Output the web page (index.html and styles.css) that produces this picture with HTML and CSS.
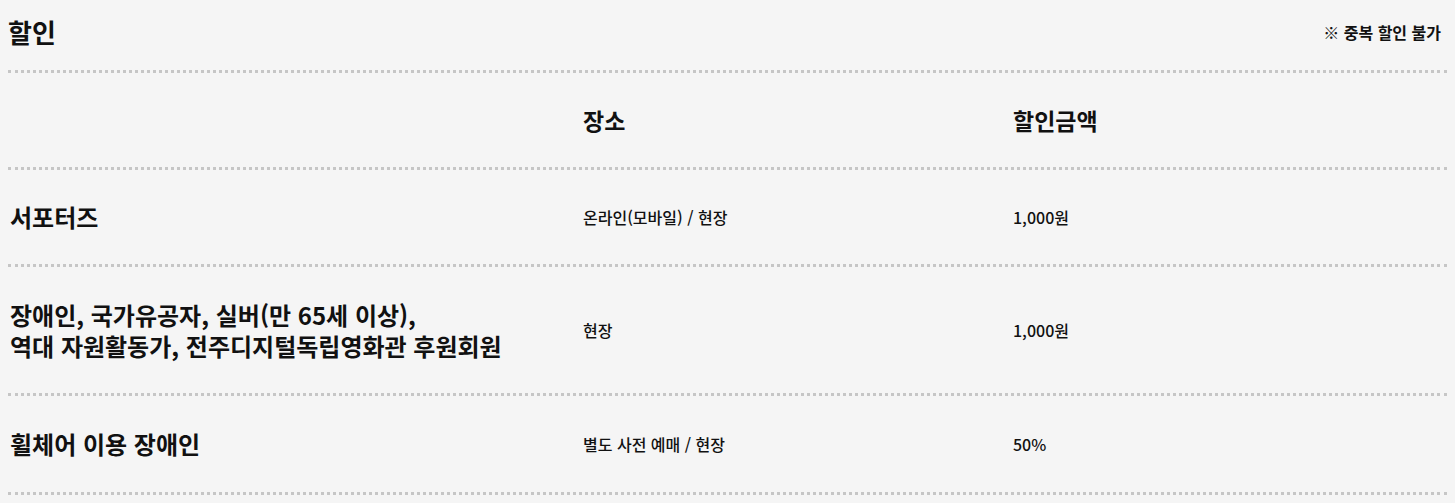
FILE: index.html
```html
<!DOCTYPE html>
<html lang="ko">
<head>
<meta charset="utf-8">
<title>할인</title>
<link rel="stylesheet" href="styles.css">
</head>
<body>
<section class="discount">
  <header class="discount-head">
    <h2 class="discount-title">할인</h2>
    <p class="discount-note">※ 중복 할인 불가</p>
  </header>
  <div class="discount-table">
    <div class="row row-head">
      <div class="cell"></div>
      <div class="cell">장소</div>
      <div class="cell">할인금액</div>
    </div>
    <div class="row">
      <div class="cell cell-name">서포터즈</div>
      <div class="cell cell-text">온라인(모바일) / 현장</div>
      <div class="cell cell-text">1,000원</div>
    </div>
    <div class="row row-tall">
      <div class="cell cell-name">장애인, 국가유공자, 실버(만 65세 이상),<br>역대 자원활동가, 전주디지털독립영화관 후원회원</div>
      <div class="cell cell-text">현장</div>
      <div class="cell cell-text">1,000원</div>
    </div>
    <div class="row row-last">
      <div class="cell cell-name">휠체어 이용 장애인</div>
      <div class="cell cell-text">별도 사전 예매 / 현장</div>
      <div class="cell cell-text">50%</div>
    </div>
  </div>
</section>
</body>
</html>
```

FILE: styles.css
```css
html, body {
  background: #f5f5f5;
}
body {
  margin: 8px;
  color: #111;
  font-family: "Noto Sans CJK KR", "Noto Sans", sans-serif;
}
.discount-head {
  display: flex;
  align-items: center;
  justify-content: space-between;
  height: 48px;
  padding-bottom: 14px;
  border-bottom: 3px dotted #c6c6c6;
}
.discount-title {
  margin: 0;
  font-size: 26px;
  font-weight: 700;
  line-height: 48px;
}
.discount-note {
  margin: 0 6px 0 0;
  font-size: 16px;
  font-weight: 700;
}
.row {
  display: grid;
  grid-template-columns: 575px 430px 1fr;
  align-items: center;
  padding: 32px 0;
  border-bottom: 3px dotted #c6c6c6;
  line-height: 30px;
}
.row-head .cell,
.cell-name {
  font-size: 23px;
  font-weight: 700;
}
.cell-name {
  font-size: 24px;
  padding-left: 2px;
}
.row-tall .cell-name {
  line-height: 31px;
}
.cell-text {
  font-size: 16px;
  font-weight: 500;
}
.row-last {
  padding: 33px 0;
}
```
